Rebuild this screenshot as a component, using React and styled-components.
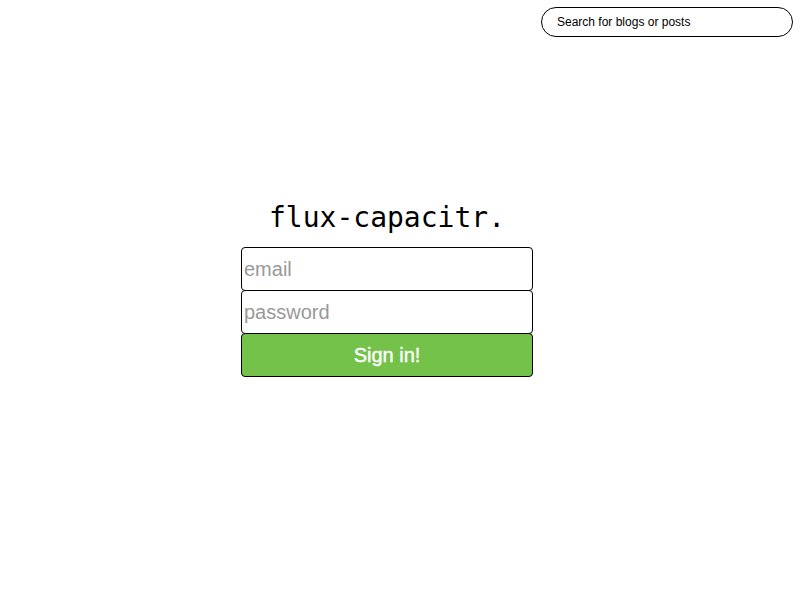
import React from "react";
import styled, { createGlobalStyle } from "styled-components";

const Global = createGlobalStyle`
  html, body { margin: 0; padding: 0; background: #fff; }
  body { font-family: "Liberation Sans", Arial, sans-serif; }
`;

const Page = styled.div`
  width: 800px;
  height: 600px;
  display: flex;
  flex-direction: column;
`;

const Header = styled.header`
  display: flex;
  justify-content: flex-end;
  padding: 7px 7px 0 0;
`;

const Search = styled.input`
  box-sizing: border-box;
  width: 252px;
  height: 30px;
  border: 1px solid #000;
  border-radius: 15px;
  padding: 0 0 1px 15px;
  font-family: "Liberation Sans", Arial, sans-serif;
  font-size: 12px;
  color: #000;
  outline: none;
  &::placeholder { color: #000; opacity: 1; }
`;

const Main = styled.main`
  display: flex;
  flex-direction: column;
  align-items: center;
  padding: 161px 26px 0 0;
`;

const Title = styled.h1`
  margin: 0 0 9px;
  font-family: "DejaVu Sans Mono", "Liberation Mono", monospace;
  font-weight: normal;
  font-size: 28px;
  line-height: 40px;
  color: #000;
`;

const Form = styled.form`
  display: flex;
  flex-direction: column;
  width: 292px;
`;

const Field = styled.input`
  box-sizing: border-box;
  width: 100%;
  height: 44px;
  margin-top: ${(p) => (p.$first ? "0" : "-1px")};
  border: 1px solid #000;
  border-radius: 4px;
  padding: 0 2px;
  font-family: "Liberation Sans", Arial, sans-serif;
  font-size: 20px;
  color: #000;
  background: #fff;
  outline: none;
  &::placeholder { color: #999; opacity: 1; }
`;

const Submit = styled.button`
  box-sizing: border-box;
  width: 100%;
  height: 44px;
  margin-top: -1px;
  border: 1px solid #000;
  border-radius: 4px;
  background: #74c24a;
  color: #fff;
  font-family: "Liberation Sans", Arial, sans-serif;
  font-size: 20px;
  font-weight: normal;
  -webkit-text-stroke: 0.4px #fff;
  cursor: pointer;
`;

export default function App() {
  return (
    <Page>
      <Global />
      <Header>
        <Search placeholder="Search for blogs or posts" />
      </Header>
      <Main>
        <Title>flux-capacitr.</Title>
        <Form onSubmit={(e) => e.preventDefault()}>
          <Field $first placeholder="email" />
          <Field type="password" placeholder="password" />
          <Submit type="submit">Sign in!</Submit>
        </Form>
      </Main>
    </Page>
  );
}
